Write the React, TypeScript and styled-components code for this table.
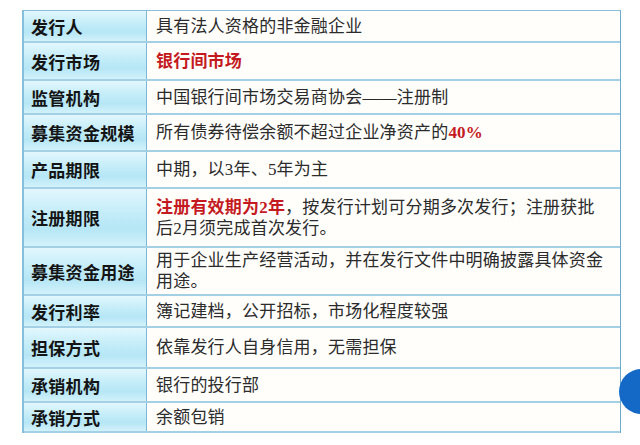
import React from "react";
import styled, { createGlobalStyle } from "styled-components";

const Global = createGlobalStyle`
  html, body { margin: 0; padding: 0; background: #ffffff; }
  body { width: 640px; height: 445px; overflow: hidden; position: relative; }
`;

const Page = styled.div`
  padding: 10px 0 0 22px;
`;

const Table = styled.div`
  width: 599px;
  border-top: 1px solid #86bfdc;
  border-left: 2px solid #86bfdc;
  border-right: 1px solid #6fa9cc;
  box-sizing: border-box;
`;

const Row = styled.div<{ $h: number }>`
  display: grid;
  grid-template-columns: 123px 1fr;
  height: ${(p) => p.$h}px;
  border-bottom: 2px solid #a4d0e6;
  box-sizing: border-box;
`;

const Label = styled.div`
  display: flex;
  align-items: center;
  padding-left: 7px;
  background: linear-gradient(to bottom, #e2f7fd 0%, #c2ecf8 45%, #b6e6f5 70%, #d2f2fb 100%);
  border-right: 1px solid #7db7d6;
  font-family: "Noto Sans CJK SC", sans-serif;
  font-weight: 700;
  font-size: 17px;
  color: #141414;
  letter-spacing: 0.3px;
`;

const Value = styled.div`
  display: flex;
  align-items: center;
  padding-left: 9px;
  background: #fffefb;
  font-family: "Liberation Serif", "Noto Sans CJK SC", serif;
  font-size: 17px;
  line-height: 21px;
  color: #2b2b2b;
  letter-spacing: 0.2px;
  white-space: nowrap;
`;

const Red = styled.span`
  color: #c41a1f;
  font-weight: 700;
`;

const Badge = styled.div`
  position: absolute;
  left: 619px;
  top: 369px;
  width: 45px;
  height: 45px;
  border-radius: 50%;
  background: #1468c6;
`;

type R = { label: string; h: number; value: React.ReactNode };

const rows: R[] = [
  { label: "发行人", h: 32, value: "具有法人资格的非金融企业" },
  { label: "发行市场", h: 38, value: <Red>银行间市场</Red> },
  { label: "监管机构", h: 34, value: "中国银行间市场交易商协会——注册制" },
  {
    label: "募集资金规模",
    h: 37,
    value: (
      <span>
        所有债券待偿余额不超过企业净资产的<Red>40%</Red>
      </span>
    ),
  },
  { label: "产品期限", h: 37, value: "中期，以3年、5年为主" },
  {
    label: "注册期限",
    h: 59,
    value: (
      <span>
        <Red>注册有效期为2年</Red>，按发行计划可分期多次发行；注册获批
        <br />
        后2月须完成首次发行。
      </span>
    ),
  },
  {
    label: "募集资金用途",
    h: 48,
    value: (
      <span>
        用于企业生产经营活动，并在发行文件中明确披露具体资金
        <br />
        用途。
      </span>
    ),
  },
  { label: "发行利率", h: 32, value: "簿记建档，公开招标，市场化程度较强" },
  { label: "担保方式", h: 41, value: "依靠发行人自身信用，无需担保" },
  { label: "承销机构", h: 34, value: "银行的投行部" },
  { label: "承销方式", h: 30, value: "余额包销" },
];

export default function App() {
  return (
    <>
      <Global />
      <Page>
        <Table>
          {rows.map((r) => (
            <Row key={r.label} $h={r.h}>
              <Label>{r.label}</Label>
              <Value>{r.value}</Value>
            </Row>
          ))}
        </Table>
      </Page>
      <Badge />
    </>
  );
}
